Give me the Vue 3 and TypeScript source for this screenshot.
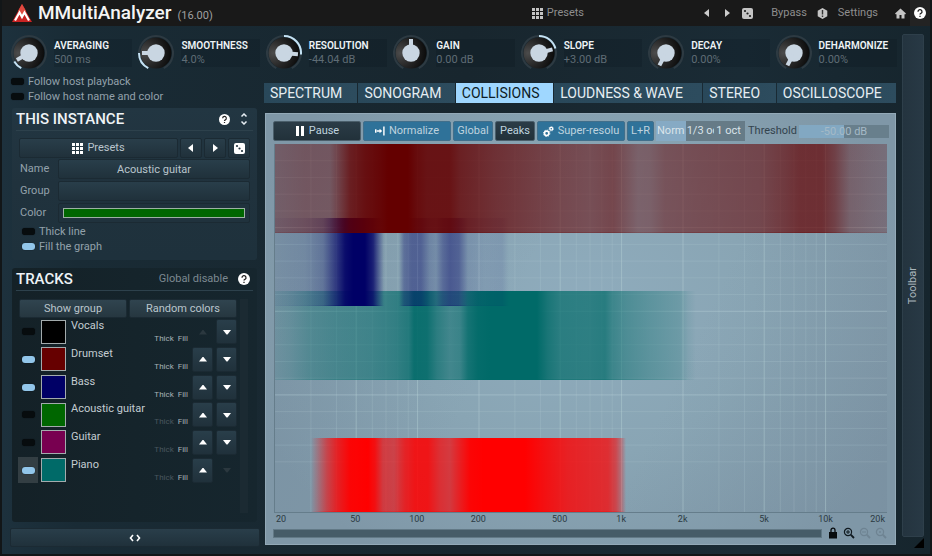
<script setup lang="ts">
import { ref } from 'vue'

interface Knob { label: string; value: string; angle: number; from: number | null }
interface Track { name: string; color: string; on: boolean; thick: boolean; up: boolean; down: boolean }
type Stop = [number, number]
interface Band { id: string; color: string; y: number; h: number; stops: Stop[] }

const knobs: Knob[] = [
  { label: 'AVERAGING', value: '500 ms', angle: 240, from: 207 },
  { label: 'SMOOTHNESS', value: '4.0%', angle: 270, from: 207 },
  { label: 'RESOLUTION', value: '-44.04 dB', angle: 95, from: 0 },
  { label: 'GAIN', value: '0.00 dB', angle: 0, from: null },
  { label: 'SLOPE', value: '+3.00 dB', angle: 75, from: 0 },
  { label: 'DECAY', value: '0.00%', angle: 208, from: null },
  { label: 'DEHARMONIZE', value: '0.00%', angle: 208, from: null },
]

function arc(from: number, to: number): string {
  const r = 17
  const p = (a: number) => {
    const t = (a * Math.PI) / 180
    return `${(18 + r * Math.sin(t)).toFixed(2)} ${(18 - r * Math.cos(t)).toFixed(2)}`
  }
  return `M${p(from)}A${r} ${r} 0 ${to - from > 180 ? 1 : 0} 1 ${p(to)}`
}

const tabs = ['SPECTRUM', 'SONOGRAM', 'COLLISIONS', 'LOUDNESS & WAVE', 'STEREO', 'OSCILLOSCOPE']
const activeTab = ref('COLLISIONS')
const name = ref('Acoustic guitar')
const group = ref('')
const color = ref('#006600')
const followPlayback = ref(false)
const followName = ref(false)
const thickLine = ref(false)
const fillGraph = ref(true)
const smoothing = ref('Norm')
const threshold = ref(50)

const tracks = ref<Track[]>([
  { name: 'Vocals', color: '#000000', on: false, thick: true, up: false, down: true },
  { name: 'Drumset', color: '#660000', on: true, thick: true, up: true, down: true },
  { name: 'Bass', color: '#000066', on: true, thick: true, up: true, down: true },
  { name: 'Acoustic guitar', color: '#006600', on: false, thick: false, up: true, down: true },
  { name: 'Guitar', color: '#780050', on: false, thick: false, up: true, down: true },
  { name: 'Piano', color: '#006a68', on: true, thick: false, up: true, down: false },
])

const W = 612
const H = 368
const freqX = (f: number) => (Math.log10(f / 20) / 3) * W

const vLines: { x: number; strong: boolean }[] = []
for (const d of [10, 100, 1000, 10000]) {
  for (let m = 1; m < 10; m++) {
    const f = d * m
    if (f > 20 && f < 20000) vLines.push({ x: freqX(f), strong: m === 1 || m === 2 || m === 5 })
  }
}
const hLines = Array.from({ length: 19 }, (_, i) => ({ y: ((i + 1) * H) / 22, strong: (i + 1) % 5 === 0 }))

const ticks: [string, number][] = [
  ['20', 20], ['50', 50], ['100', 100], ['200', 200], ['500', 500],
  ['1k', 1000], ['2k', 2000], ['5k', 5000], ['10k', 10000], ['20k', 20000],
]

// Painted in order: tracks higher in the list cover the ones below them.
const bands: Band[] = [
  { id: 'clash', color: '#ff0000', y: 294, h: 74, stops: [[36, 0], [42, .2], [52, .55], [62, .78], [75, .97], [93, 1], [100, .9], [108, .62], [119, .58], [130, .78], [140, .87], [153, .87], [165, .7], [175, .64], [183, .78], [195, .97], [208, 1], [250, 1], [270, .9], [293, .8], [325, .74], [333, .72], [341, .56], [347, .28], [351, 0]] },
  { id: 'piano', color: '#006a68', y: 147, h: 89, stops: [[0, .12], [15, .2], [35, .36], [60, .45], [95, .52], [120, .62], [134, .74], [139, .92], [152, .9], [162, .68], [175, .52], [185, .58], [193, .85], [203, .97], [215, 1], [262, 1], [273, .82], [285, .7], [312, .68], [330, .72], [337, .58], [350, .46], [375, .34], [405, .22], [413, .08], [421, 0]] },
  { id: 'bass', color: '#000066', y: 74, h: 88, stops: [[0, .04], [30, .1], [48, .24], [60, .6], [70, .92], [78, 1], [90, 1], [98, .8], [104, .35], [109, 0], [124, 0], [129, .3], [137, .4], [146, .4], [155, .18], [161, .14], [168, .35], [175, .46], [184, .4], [193, .12], [210, .07], [227, .09], [234, 0]] },
  { id: 'drums', color: '#640000', y: 0, h: 89, stops: [[0, .36], [30, .42], [55, .42], [64, .58], [75, .8], [90, .9], [105, .96], [113, 1], [133, 1], [141, .93], [152, .88], [175, .88], [185, .8], [220, .7], [285, .57], [315, .53], [338, .58], [350, .5], [363, .41], [375, .42], [390, .5], [425, .53], [485, .56], [510, .64], [525, .7], [547, .7], [560, .58], [575, .36], [595, .3], [612, .26]] },
]
</script>

<template>
  <div class="app">
    <header class="top">
      <svg class="logo" viewBox="0 0 20 18" aria-hidden="true">
        <path d="M10 0 L20 18 H0 Z" fill="#c92323" />
        <path d="M10 0 L14 7 L10 11 L6 7 Z" fill="#e04a40" />
        <path d="M3 16.500 L7.500 8.500 L10 13 L12.500 8.500 L17 16.500" fill="none" stroke="#fff" stroke-width="2.200" />
      </svg>
      <h1>MMultiAnalyzer</h1>
      <span class="version">(16.00)</span>
      <button class="plain presets-top">
        <svg class="i11" viewBox="0 0 11 11"><path d="M0 0h3v3H0zM4 0h3v3H4zM8 0h3v3H8zM0 4h3v3H0zM4 4h3v3H4zM8 4h3v3H8zM0 8h3v3H0zM4 8h3v3H4zM8 8h3v3H8z" fill="#c4c4c4" /></svg>
        Presets
      </button>
      <nav class="top-actions">
        <button class="plain" aria-label="Previous preset"><svg class="i10" viewBox="0 0 10 10"><path d="M7 1v8L2 5z" fill="#ccc" /></svg></button>
        <button class="plain" aria-label="Next preset"><svg class="i10" viewBox="0 0 10 10"><path d="M3 1v8l5-4z" fill="#ccc" /></svg></button>
        <button class="plain" aria-label="Randomize"><svg class="i11" viewBox="0 0 11 11"><rect width="11" height="11" rx="2" fill="#c4c4c4" /><g fill="#191919"><circle cx="3" cy="3" r="1.100" /><circle cx="5.500" cy="5.500" r="1.100" /><circle cx="8" cy="8" r="1.100" /></g></svg></button>
        <button class="plain bypass">Bypass</button>
        <button class="plain" aria-label="Information"><svg class="i11" viewBox="0 0 11 11"><path d="M5.500 0 10.300 2.700v5.600L5.500 11 .7 8.300V2.700z" fill="#c4c4c4" /><path d="M4.800 2h1.400v4.500H4.800zM4.800 7.500h1.400v1.400H4.800z" fill="#333" /></svg></button>
        <button class="plain settings">Settings</button>
        <button class="plain" aria-label="Home"><svg class="i11" viewBox="0 0 11 11"><path d="M5.500.5 11 5.500 10 6.500 9.500 6v4.500h-3V7h-2v3.500h-3V6l-.5.500-1-1z" fill="#c4c4c4" /></svg></button>
        <button class="plain help" aria-label="Help"><svg class="i12" viewBox="0 0 12 12"><circle cx="6" cy="6" r="6" fill="#fff" /><path d="M4 4.700a2 2 0 1 1 2.900 1.700Q6 6.800 6 7.600M6 8.700v1.200" fill="none" stroke="#222" stroke-width="1.300" /></svg></button>
      </nav>
    </header>

    <div class="body">
      <div class="content">
        <section class="knobs">
          <div v-for="k in knobs" :key="k.label" class="knob">
            <svg class="dial" viewBox="0 0 36 36" role="img" :aria-label="k.label">
              <defs>
                <radialGradient id="dialFill" cx="0.150" cy="0.500" r="0.900">
                  <stop offset="0" stop-color="#4c4c4c" /><stop offset="0.500" stop-color="#262626" /><stop offset="1" stop-color="#080808" />
                </radialGradient>
              </defs>
              <path :d="arc(207, 513)" class="track-ring" />
              <circle cx="18" cy="18" r="15.500" fill="url(#dialFill)" />
              <circle cx="18" cy="18" r="8.700" fill="#c9d6e2" />
              <rect x="16" y="4" width="4" height="12" fill="#c9d6e2" :transform="`rotate(${k.angle} 18 18)`" />
              <path v-if="k.from !== null" :d="arc(k.from, k.angle)" class="value-ring" />
            </svg>
            <div class="knob-text"><strong>{{ k.label }}</strong><span>{{ k.value }}</span></div>
          </div>
        </section>

        <div class="columns">
          <aside class="left">
            <div class="follow">
              <label class="check"><input v-model="followPlayback" type="checkbox" />Follow host playback</label>
              <label class="check"><input v-model="followName" type="checkbox" />Follow host name and color</label>
            </div>

            <section class="panel instance">
              <div class="panel-head">
                <h2>THIS INSTANCE</h2>
                <button class="plain" aria-label="Help"><svg class="i11" viewBox="0 0 12 12"><circle cx="6" cy="6" r="6" fill="#fff" /><path d="M4 4.700a2 2 0 1 1 2.900 1.700Q6 6.800 6 7.600M6 8.700v1.200" fill="none" stroke="#222" stroke-width="1.300" /></svg></button>
                <button class="plain fold" aria-label="Collapse"><svg viewBox="0 0 8 12"><path d="M1.500 3.500 4 1l2.500 2.500M1.500 8.500 4 11l2.500-2.500" fill="none" stroke="#e6edf2" stroke-width="1.500" /></svg></button>
              </div>
              <div class="preset-row">
                <button class="btn"><svg class="i11" viewBox="0 0 11 11"><path d="M0 0h3v3H0zM4 0h3v3H4zM8 0h3v3H8zM0 4h3v3H0zM4 4h3v3H4zM8 4h3v3H8zM0 8h3v3H0zM4 8h3v3H4zM8 8h3v3H8z" fill="#fff" /></svg>Presets</button>
                <button class="btn" aria-label="Previous"><svg class="i10" viewBox="0 0 10 10"><path d="M7 1v8L2 5z" fill="#fff" /></svg></button>
                <button class="btn" aria-label="Next"><svg class="i10" viewBox="0 0 10 10"><path d="M3 1v8l5-4z" fill="#fff" /></svg></button>
                <button class="btn" aria-label="Randomize"><svg class="i11" viewBox="0 0 11 11"><rect width="11" height="11" rx="2" fill="#fff" /><g fill="#22323c"><circle cx="3" cy="3" r="1.100" /><circle cx="5.500" cy="5.500" r="1.100" /><circle cx="8" cy="8" r="1.100" /></g></svg></button>
              </div>
              <div class="field"><label for="inst-name">Name</label><input id="inst-name" v-model="name" class="box" type="text" /></div>
              <div class="field"><label for="inst-group">Group</label><input id="inst-group" v-model="group" class="box" type="text" /></div>
              <div class="field"><label for="inst-color">Color</label><input id="inst-color" v-model="color" class="box color" type="color" /></div>
              <div class="options">
                <label class="check"><input v-model="thickLine" type="checkbox" />Thick line</label>
                <label class="check"><input v-model="fillGraph" type="checkbox" />Fill the graph</label>
              </div>
            </section>

            <section class="panel tracks">
              <div class="panel-head">
                <h2>TRACKS</h2>
                <button class="plain dim">Global disable</button>
                <button class="plain" aria-label="Help"><svg class="i12" viewBox="0 0 12 12"><circle cx="6" cy="6" r="6" fill="#fff" /><path d="M4 4.700a2 2 0 1 1 2.900 1.700Q6 6.800 6 7.600M6 8.700v1.200" fill="none" stroke="#222" stroke-width="1.300" /></svg></button>
              </div>
              <div class="track-area">
                <div class="track-main">
                  <div class="track-buttons"><button class="btn bright">Show group</button><button class="btn bright">Random colors</button></div>
                  <ul class="track-list">
                    <li v-for="t in tracks" :key="t.name">
                      <label class="track-on" :class="{ hover: t.name === 'Piano' }"><input v-model="t.on" type="checkbox" :aria-label="t.name" /></label>
                      <button class="swatch" :style="{ background: t.color }" :aria-label="t.name + ' color'"></button>
                      <div class="track-info">
                        <span class="track-name">{{ t.name }}</span>
                        <span class="flags"><button class="plain" :class="{ off: !t.thick }">Thick</button><button class="plain">Fill</button></span>
                      </div>
                      <button class="btn move" :class="{ disabled: !t.up }" :disabled="!t.up" aria-label="Move up"><svg class="i10" viewBox="0 0 10 10"><path d="M1 7.500h8L5.500 3h-1z" fill="currentColor" /></svg></button>
                      <button class="btn move" :class="{ disabled: !t.down }" :disabled="!t.down" aria-label="Move down"><svg class="i10" viewBox="0 0 10 10"><path d="M1 3h8L5.500 7.500h-1z" fill="currentColor" /></svg></button>
                    </li>
                  </ul>
                </div>
                <div class="vbar"></div>
              </div>
            </section>

            <button class="btn expand" aria-label="Resize column"><svg viewBox="0 0 12 8"><path d="M4 1 1.500 4 4 7M8 1l2.500 3L8 7" fill="none" stroke="#fff" stroke-width="1.600" /></svg></button>
          </aside>

          <main class="right">
            <nav class="tabs">
              <button v-for="t in tabs" :key="t" :class="{ active: t === activeTab }" @click="activeTab = t">{{ t }}</button>
            </nav>

            <section class="analyzer">
              <div class="controls">
                <button class="ctl dark"><svg class="i10" viewBox="0 0 10 10"><path d="M1 0h3v10H1zM6 0h3v10H6z" fill="#fff" /></svg>Pause</button>
                <button class="ctl blue"><svg class="i10" viewBox="0 0 11 10"><path d="M0 3h1.600v4H0zM2 4.300h3V2.500L8 5 5 7.500V5.700H2zM9 0h1.600v10H9z" fill="#fff" /></svg>Normalize</button>
                <button class="ctl blue">Global</button>
                <button class="ctl dark">Peaks</button>
                <button class="ctl blue"><svg class="i11" viewBox="0 0 12 12" fill="none" stroke="#fff"><circle cx="4" cy="8" r="2.400" stroke-width="1.800" /><circle cx="4" cy="8" r="3.500" stroke-width="1" stroke-dasharray="1.400 1.300" /><circle cx="9" cy="3" r="1.600" stroke-width="1.400" /><circle cx="9" cy="3" r="2.500" stroke-width=".8" stroke-dasharray="1 1" /></svg>Super-resolu</button>
                <button class="ctl blue">L+R</button>
                <div class="segment" role="radiogroup" aria-label="Smoothing">
                  <label v-for="s in ['Norm', '1/3 oct', '1 oct']" :key="s" :class="{ on: smoothing === s }"><input v-model="smoothing" type="radio" name="smoothing" :value="s" /><span>{{ s }}</span></label>
                </div>
                <label for="threshold" class="thr-label">Threshold</label>
                <div class="thr"><input id="threshold" v-model="threshold" type="range" min="0" max="100" /><output for="threshold">-50.00 dB</output></div>
              </div>

              <svg class="plot" :viewBox="`0 0 ${W} ${H}`" preserveAspectRatio="none" role="img" aria-label="Collisions spectrum">
                <defs>
                  <linearGradient v-for="b in bands" :id="b.id" :key="b.id" gradientUnits="userSpaceOnUse" x1="0" y1="0" :x2="W" y2="0">
                    <stop v-for="(s, i) in b.stops" :key="i" :offset="s[0] / W" :stop-color="b.color" :stop-opacity="s[1]" />
                  </linearGradient>
                </defs>
                <line v-for="(l, i) in vLines" :key="'v' + i" :x1="l.x" :x2="l.x" y1="0" :y2="H" class="grid" :class="{ strong: l.strong }" />
                <line v-for="(l, i) in hLines" :key="'h' + i" x1="0" :x2="W" :y1="l.y" :y2="l.y" class="grid" :class="{ strong: l.strong }" />
                <g v-for="b in bands" :key="b.id">
                  <rect x="0" :y="b.y" :width="W" :height="b.h" :fill="`url(#${b.id})`" />
                  <rect x="0" :y="b.y + b.h - 1" :width="W" height="1" :fill="`url(#${b.id})`" fill-opacity=".4" />
                </g>
              </svg>

              <div class="axis">
                <span v-for="[t, f] in ticks" :key="t" :class="{ first: f === 20, last: f === 20000 }" :style="{ left: (freqX(f) / W) * 100 + '%' }">{{ t }}</span>
              </div>

              <div class="scroll-row">
                <div class="hbar"></div>
                <button class="plain" aria-label="Lock"><svg class="i12" viewBox="0 0 12 12"><path d="M2 5h8v6.500H2z" fill="#080c0e" /><path d="M4 5V3.200a2 2 0 0 1 4 0V5" fill="none" stroke="#080c0e" stroke-width="1.300" /></svg></button>
                <button class="plain" aria-label="Zoom in"><svg class="i12" viewBox="0 0 12 12" fill="none" stroke="#101a20"><circle cx="5" cy="5" r="3.600" stroke-width="1.200" /><path d="M3 5h4M5 3v4" /><path d="m7.700 7.700 3.300 3.300" stroke-width="1.800" /></svg></button>
                <button class="plain faint" aria-label="Zoom out"><svg class="i12" viewBox="0 0 12 12" fill="none" stroke="#101a20"><circle cx="5" cy="5" r="3.600" stroke-width="1.200" /><path d="M3 5h4" /><path d="m7.700 7.700 3.300 3.300" stroke-width="1.800" /></svg></button>
                <button class="plain faint" aria-label="Reset zoom"><svg class="i12" viewBox="0 0 12 12" fill="none" stroke="#101a20"><circle cx="5" cy="5" r="3.600" stroke-width="1.200" /><circle cx="5" cy="5" r=".6" /><path d="m7.700 7.700 3.300 3.300" stroke-width="1.800" /></svg></button>
              </div>
            </section>
          </main>
        </div>
      </div>

      <div class="side">
        <button class="toolbar"><span>Toolbar</span></button>
        <svg class="corner" viewBox="0 0 10 10" aria-hidden="true"><path d="M10 0v10H0z" fill="#000" /></svg>
      </div>
    </div>
  </div>
</template>

<style>
body { margin: 0; background: #121618; }
</style>

<style scoped>
* { box-sizing: border-box; }
button, input { font: inherit; color: inherit; margin: 0; padding: 0; }
button { white-space: nowrap; cursor: pointer; }
svg { display: block; flex: none; }
.i10 { width: 10px; height: 10px; }
.i11 { width: 11px; height: 11px; }
.i12 { width: 12px; height: 12px; }

.app {
  min-height: 100vh;
  display: flex;
  flex-direction: column;
  padding: 0 2px 2px;
  background: #121618;
  color: #93a1ab;
  font: 11px/14px Roboto, "Liberation Sans", sans-serif;
}
.plain { display: flex; align-items: center; gap: 4px; border: 0; background: none; }

.top {
  display: flex;
  align-items: center;
  height: 26px;
  padding-left: 10px;
  background: #191919;
  color: #8e8e8e;
}
.logo { width: 20px; height: 18px; }
h1 { margin: 0 6px; font-size: 19px; line-height: 24px; font-weight: 500; color: #f4f4f4; }
.version { padding-top: 5px; color: #a0a0a0; }
.presets-top { margin-left: auto; }
.top-actions { flex: 0 1 346px; display: flex; align-items: center; justify-content: flex-end; gap: 10px; }
.bypass { margin-left: 8px; }
.settings { margin-right: 7px; }
.help { width: 20px; height: 26px; justify-content: center; background: #232323; margin-left: -6px; }

.body {
  flex: 1;
  display: flex;
  gap: 6px;
  padding: 8px 6px 6px 8px;
  background: linear-gradient(90deg, #1d313d 0, #192b35 8%, #18262e 50%, #1a2b35 80%, #16252d 100%);
}
.content { flex: 1; min-width: 0; display: flex; flex-direction: column; }

.knobs { display: grid; grid-template-columns: repeat(7, minmax(0, 1fr)); height: 38px; margin-right: -6px; }
.knob { display: flex; align-items: center; gap: 7px; padding-left: 1px; min-width: 0; }
.dial { width: 36px; height: 36px; }
.track-ring { fill: none; stroke: #2d3a42; stroke-width: 2; }
.value-ring { fill: none; stroke: #c4e2f4; stroke-width: 2; }
.knob-text { flex: 1; display: flex; flex-direction: column; margin-right: 5px; background: rgba(0, 8, 14, .13); min-width: 0; white-space: nowrap; }
.knob-text strong { font-weight: 600; font-size: 10px; line-height: 14px; color: #eef3f6; }
.knob-text span { color: #5f6c75; }

.columns { flex: 1; display: grid; grid-template-columns: 248px minmax(0, 1fr); gap: 6px; }
.left { display: flex; flex-direction: column; }
.follow { padding: 2px 0 4px 1px; }
.check { display: flex; align-items: center; gap: 4px; height: 15px; }
input[type="checkbox"] { appearance: none; width: 13px; height: 7px; border-radius: 3px; background: #070c0e; box-shadow: 0 0 1px #05090b; }
input[type="checkbox"]:checked { background: #92c6ea; }

.panel { margin: 0 1px 0 2px; padding: 0 7px; border-radius: 3px; }
.instance { height: 152px; background: linear-gradient(#223642, #20323d 50%, #1e313c); }
.tracks { flex: 1; margin-top: 8px; background: linear-gradient(90deg, #142127, #15242b 50%, #16262e); }
.panel-head { display: flex; align-items: center; gap: 10px; height: 23px; margin: 0 -3px; padding: 0 3px 0 0; border-bottom: 1px solid #2d414c; }
h2 { flex: 1; margin: 0; font-size: 15px; line-height: 20px; font-weight: 500; color: #eef3f6; }
.fold svg { width: 8px; height: 12px; margin-right: 2px; }
.dim { color: #7c8991; }

.btn {
  display: flex; align-items: center; justify-content: center; gap: 4px;
  border: 1px solid #1b2a33; border-radius: 2px;
  background: linear-gradient(#293e4a, #20313b);
  color: #bac5cc;
}
.bright { background: linear-gradient(#30444f, #263740); }
.preset-row { display: grid; grid-template-columns: 1fr 22px 22px 22px; gap: 2px; height: 20px; margin-top: 7px; }
.field { display: grid; grid-template-columns: 38px minmax(0, 1fr); align-items: center; height: 22px; padding-left: 1px; }
.box { width: 100%; height: 20px; border: 1px solid #1b2a33; border-radius: 2px; background: linear-gradient(#293e4a, #20313b); text-align: center; color: #bac5cc; }
.color { appearance: none; padding: 4px; background: #20323d; }
.color::-webkit-color-swatch-wrapper { padding: 0; }
.color::-webkit-color-swatch { border: 1px solid #9db0a4; border-radius: 0; }
.options { padding-left: 3px; }

.track-area { display: grid; grid-template-columns: minmax(0, 1fr) 8px; gap: 3px; margin-top: 8px; padding-right: 2px; height: 214px; }
.vbar { background: #1b2a32; }
.track-buttons { display: grid; grid-template-columns: 1fr 1fr; gap: 2px; height: 19px; }
.track-list { list-style: none; margin: 0; padding: 0; height: 166px; display: grid; grid-auto-rows: 1fr; }
.track-list li { display: grid; grid-template-columns: 19px 25px minmax(0, 1fr) 21px 21px; column-gap: 3px; align-items: center; }
.track-on { display: flex; align-items: center; justify-content: center; height: 26px; margin-left: -1px; }
.hover { background: #333e43; }
.swatch { height: 24px; border: 1px solid #a3abad; border-radius: 0; }
.track-info { display: grid; grid-template-rows: 14px 12px; padding: 1px 0 0 2px; color: #c3ccd1; }
.track-name { line-height: 14px; }
.flags { display: flex; justify-content: flex-end; gap: 4px; font-size: 8px; line-height: 12px; padding: 0 1px; }
.flags button { color: #a7b1b6; }
.flags .off { color: #49565e; }
.move { height: 25px; color: #fff; }
.move.disabled { border-color: transparent; background: none; color: #2b383f; }
.expand { height: 19px; margin: 6px -2px 1px 0; }
.expand svg { width: 12px; height: 8px; }

.right { display: flex; flex-direction: column; padding-top: 10px; }
.tabs { display: grid; grid-template-columns: 94fr 97fr 98fr 149fr 73fr 120fr; gap: 1px; height: 22px; padding: 1px 0; }
.tabs button { text-align: left; padding-left: 6px; border: 0; background: linear-gradient(90deg, #29485a, #2d4c5e); color: #e6eef3; font-size: 14px; line-height: 20px; overflow: hidden; }
.tabs .active { background: #9fd7ff; color: #0e1c25; }

.analyzer {
  flex: 1; display: flex; flex-direction: column;
  margin: 9px 0 3px 1px; padding: 7px 6px 5px 7px;
  border: 1px solid #93a9b7;
  background: radial-gradient(ellipse 55% 70% at 50% 45%, #8facbd, #89a5b4 50%, #7f97a7 100%);
}
.controls { display: grid; grid-template-columns: 88fr 88fr 40fr 40fr 88fr 27fr 89fr auto 90fr; gap: 2px; align-items: center; height: 20px; }
.ctl { display: flex; align-items: center; justify-content: center; gap: 4px; height: 20px; min-width: 0; overflow: hidden; border: 1px solid; border-radius: 2px; color: #bfd3df; }
.dark { background: linear-gradient(#2b3c47, #22313a); border-color: #4b5f6b; }
.blue { background: #2f7299; border-color: #416f8b; }
.segment { display: grid; grid-template-columns: repeat(3, minmax(0, 1fr)); height: 20px; background: #667b87; color: #dae4ea; }
.segment label { display: flex; align-items: center; padding: 0 1px; min-width: 0; }
.segment span { min-width: 0; overflow: hidden; white-space: nowrap; }
.segment input { position: absolute; opacity: 0; width: 1px; height: 1px; }
.segment .on { background: #86aac4; }
.thr-label { padding-left: 1px; color: #33434d; }
.thr { position: relative; height: 13px; }
.thr input { appearance: none; display: block; width: 100%; height: 13px; background: linear-gradient(90deg, #82a8c2 50%, #687f8c 50%); }
.thr input::-webkit-slider-thumb { appearance: none; width: 1px; height: 13px; background: transparent; }
.thr output { position: absolute; inset: 0; text-align: center; line-height: 13px; color: #a5bac7; pointer-events: none; }

.plot { flex: 1; width: auto; min-height: 0; height: 368px; margin: 3px 2px 0 1px; border: 1px solid #657d8b; border-top: 0; border-right: 0; background: linear-gradient(115deg, rgba(105, 130, 150, .25), transparent 40%, transparent 65%, rgba(110, 130, 148, .25)); }
.grid { stroke: #b9d3d9; stroke-opacity: .2; vector-effect: non-scaling-stroke; }
.strong { stroke-opacity: .42; }
.axis { position: relative; height: 13px; margin: 0 2px 0 1px; font-size: 9px; line-height: 13px; color: #2b3a43; }
.axis span { position: absolute; transform: translateX(-50%); }
.axis .first { transform: translateX(2px); }
.axis .last { transform: translateX(-100%) translateX(-2px); }
.scroll-row { display: flex; align-items: center; gap: 4px; height: 12px; margin-top: 1px; padding-right: 2px; }
.hbar { flex: 1; height: 9px; border: 1px solid #627986; background: #465c68; margin-right: 1px; }
.faint { opacity: .15; }

.side { display: flex; flex-direction: column; width: 22px; }
.toolbar { flex: 1; display: flex; align-items: center; justify-content: center; border: 1px solid #2e3f4a; border-radius: 2px; background: linear-gradient(90deg, #24343f, #283945); color: #a8b4bb; }
.toolbar span { writing-mode: vertical-rl; transform: rotate(180deg); }
.corner { width: 10px; height: 10px; margin: 1px 0 0 12px; }
</style>
